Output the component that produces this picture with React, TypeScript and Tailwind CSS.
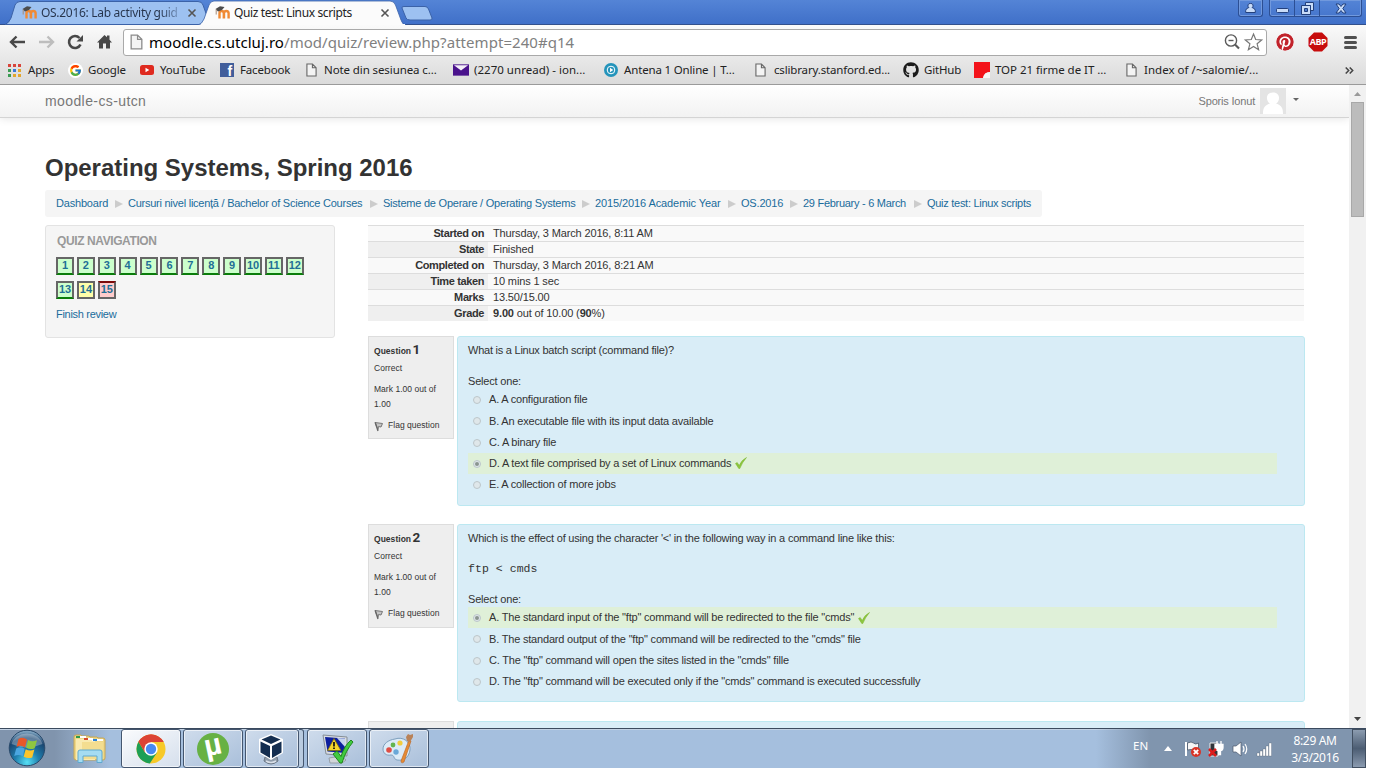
import React from "react";
import { FcGoogle } from "react-icons/fc";
import { FaGithub, FaPinterest } from "react-icons/fa";

function MoodleIcon() {
  return (
    <svg width="17" height="15" viewBox="0 0 17 15" className="shrink-0">
      <path d="M5.500 13.500V8Q5.500 6 7.500 6T9.800 8V13.500M10 13.500V8Q10.300 6 12.300 6T14.600 8V13.500" fill="none" stroke="#f08a34" strokeWidth="2.400" />
      <path d="M1.500 4L6 1.200 10.500 2 8 5 4 6.500Z" fill="#4c4c4c" />
      <path d="M2.200 4.500v5" stroke="#a58a78" strokeWidth="1" />
    </svg>
  );
}

function PageIcon({ className }: { className?: string }) {
  return (
    <svg width="12" height="15" viewBox="0 0 12 15" className={className}>
      <path d="M1 1h6l4 4v9H1z M7 1v4h4" fill="#f4f4f4" stroke="currentColor" strokeWidth="1.2" />
    </svg>
  );
}

function Close() {
  return (
    <svg width="10" height="10" viewBox="0 0 10 10" className="shrink-0">
      <path d="M1.500 1.500l7 7M8.500 1.500l-7 7" stroke="#555" strokeWidth="1.600" />
    </svg>
  );
}

function TabStrip() {
  return (
    <div className="relative flex h-[25px] bg-gradient-to-b from-[#5484d6] to-[#3f6fc8]">
      <svg width="1366" height="25" viewBox="0 0 1366 25" className="absolute left-0 top-0">
        <path d="M0 24.500H1366" stroke="#32508c" />
        <path d="M5 24.500Q9 23 11 18L15 5Q16.500 1.500 20 1.500H198Q202 1.500 203 5L210 24.500Z" fill="#9dc1f1" stroke="#3b62a8" />
        <path d="M198 25Q202 24 204 19L209 5Q210.500 1 214 1H390Q394 1 395.500 5L401 20Q402.500 25 406 25Z" fill="#fbfbfb" stroke="#3b62a8" strokeWidth=".8" />
        <path d="M201 25h204" stroke="#fbfbfb" strokeWidth="2" />
        <path d="M402 8Q401.500 6.500 404 6.500H425Q427.500 6.500 428.500 9L432 18Q432.500 20 430 20H410Q407 20 406 18Z" fill="#9dc1f1" stroke="#3b62a8" />
      </svg>
      <div className="relative flex h-[25px] w-[203px] items-center pl-[21px]">
        <MoodleIcon />
        <span className="ml-[3px] w-[140px] whitespace-nowrap bg-gradient-to-r from-[#26344c] from-85% to-[#86a8d8] bg-clip-text text-[12px] tracking-[-0.3px] text-transparent">OS.2016: Lab activity guid</span>
        <span className="ml-[6px]"><Close /></span>
      </div>
      <div className="relative flex h-[25px] w-[200px] items-center pl-[11px]">
        <MoodleIcon />
        <span className="ml-[3px] w-[143px] whitespace-nowrap text-[12px] tracking-[-0.38px] text-[#222]">Quiz test: Linux scripts</span>
        <span className="ml-[3px]"><Close /></span>
      </div>
      <div className="relative ml-auto mr-[4px] flex h-[17px] gap-[6px]">
        <div className="flex w-[25px] items-center justify-center rounded-b-[3px] border border-t-0 border-[#2c4f94] shadow-[inset_0_0_0_1px_#7199dd]">
          <svg width="11" height="10" viewBox="0 0 11 10"><path d="M5.500.5a2.200 2.200 0 0 1 1.600 4q3 .8 3.200 3v2H.7v-2q.2-2.200 3.200-3a2.200 2.200 0 0 1 1.600-4Z" fill="#c9dcf8" stroke="#23407c" /></svg>
        </div>
        <div className="flex w-[93px] rounded-b-[3px] border border-t-0 border-[#2c4f94] shadow-[inset_0_0_0_1px_#7199dd]">
          <div className="flex w-[25px] items-end justify-center border-r border-[#2c4f94] pb-[3px]">
            <svg width="13" height="5" viewBox="0 0 13 5"><rect x=".5" y=".5" width="12" height="4" rx="1" fill="#c9dcf8" stroke="#23407c" /></svg>
          </div>
          <div className="flex w-[25px] items-center justify-center border-r border-[#2c4f94]">
            <svg width="13" height="13" viewBox="0 0 13 13">
              <path d="M4.500.5h8v8h-3v-5h-5z" fill="#c9dcf8" stroke="#23407c" />
              <path d="M.5 3.500h9v9h-9zM3.500 6.500v3h3v-3z" fill="#c9dcf8" fillRule="evenodd" stroke="#23407c" />
            </svg>
          </div>
          <div className="flex grow items-center justify-center">
            <svg width="12" height="11" viewBox="0 0 12 11"><path d="M1 1h3l2 2.500L8 1h3L7.800 5.500 11 10H8L6 7.500 4 10H1l3.200-4.500z" fill="#c9dcf8" stroke="#23407c" /></svg>
          </div>
        </div>
      </div>
    </div>
  );
}

function Toolbar() {
  return (
    <div className="flex h-[32px] items-center pt-[2px]">
      <svg width="123" height="26" viewBox="0 0 123 26" className="shrink-0">
        <g fill="none" strokeWidth="2.400">
          <path d="M25 13H11M16.500 7.500L11 13l5.500 5.500" stroke="#484848" />
          <path d="M39 13h14M47.500 7.500L53 13l-5.500 5.500" stroke="#bdbdbd" />
          <path d="M80.500 15.500A6 6 0 1 1 79.500 9" stroke="#484848" strokeWidth="2.600" />
        </g>
        <path d="M83 6v6.500h-6.500z" fill="#484848" />
        <path d="M97 13.500L104.500 6l2.500 2.300V6.500h2.500v4.300l2.500 2.700h-2v6h-4v-5h-3v5h-4v-6z" fill="#484848" />
      </svg>
      <div className="flex h-[27px] w-[1144px] items-center rounded-[3px] border border-[#a9a9a9] bg-white pl-[6px]">
        <PageIcon className="h-[16px] w-[13px] text-[#8b8b8b]" />
        <span className="ml-[6px] mt-px whitespace-nowrap text-[15px] tracking-[0.05px] text-[#808080]"><span className="text-black">moodle.cs.utcluj.ro</span>/mod/quiz/review.php?attempt=240#q14</span>
        <svg width="40" height="22" viewBox="0 0 40 22" className="ml-auto mr-[2px]">
          <circle cx="7" cy="9.500" r="5.600" fill="none" stroke="#5a5a5a" strokeWidth="1.400" />
          <path d="M4.500 9.500h5" stroke="#5a5a5a" strokeWidth="1.400" />
          <path d="M11 13.500l4 4" stroke="#5a5a5a" strokeWidth="2.200" />
          <path d="M29.500 3l2.200 5.500 6 .5-4.600 3.800 1.500 5.900-5.100-3.200-5.100 3.200 1.500-5.900-4.600-3.800 6-.5z" fill="#fff" stroke="#777" strokeWidth="1.200" />
        </svg>
      </div>
      <FaPinterest className="ml-[9px] size-[18px] shrink-0 rounded-full bg-white text-[#c1232b]" />
      <div className="relative ml-[14px] size-[20px] shrink-0">
        <svg width="20" height="20" viewBox="0 0 20 20" className="absolute"><path d="M6 .5h8L19.500 6v8L14 19.500H6L.5 14V6z" fill="#c70d0d" /></svg>
        <span className="absolute inset-0 text-center font-['Open_Sans'] text-[9px] font-bold leading-[20px] tracking-[-0.5px] text-white">ABP</span>
      </div>
      <div className="ml-[16px] flex w-[13px] flex-col gap-[2px]">
        <i className="h-[3px] rounded-sm bg-[#505050]" /><i className="h-[3px] rounded-sm bg-[#505050]" /><i className="h-[3px] rounded-sm bg-[#505050]" />
      </div>
    </div>
  );
}

function Mark({ w, icon, children }: { w: string; icon: React.ReactNode; children: React.ReactNode }) {
  return (
    <div className={"flex shrink-0 items-center whitespace-nowrap " + w}>
      {icon}
      <span>{children}</span>
    </div>
  );
}

function Bookmarks() {
  const dots = ["#d8453b", "#d8453b", "#d8453b", "#3b9b52", "#3b78d8", "#e3a62e", "#3b9b52", "#e3a62e", "#e3a62e"];
  return (
    <div className="flex h-[28px] items-center border-b border-[#9a9a9a] pb-px pl-[8px] text-[11.500px] tracking-[-0.16px] text-[#222]">
      <Mark w="w-[60px]" icon={<svg width="13" height="13" viewBox="0 0 13 13" className="mr-[7px]">{dots.map((c, i) => <rect key={i} x={(i % 3) * 5} y={Math.floor(i / 3) * 5} width="3" height="3" fill={c} />)}</svg>}>Apps</Mark>
      <Mark w="w-[72px]" icon={<span className="mr-[5px] flex size-[15px] items-center justify-center rounded-full bg-white"><FcGoogle className="size-[13px]" /></span>}>Google</Mark>
      <Mark w="w-[80px]" icon={<svg width="14" height="10" viewBox="0 0 14 10" className="mr-[6px]"><rect width="14" height="10" rx="2.500" fill="#df2a1f" /><path d="M5.500 2.700v4.600L9.300 5z" fill="#fff" /></svg>}>YouTube</Mark>
      <Mark w="w-[86px]" icon={<span className="mr-[6px] flex h-[14px] w-[14px] items-center justify-end bg-[#415e9b] pr-[2px] pt-[2px] font-['Liberation_Sans'] text-[14px] font-bold leading-[14px] text-white">f</span>}>Facebook</Mark>
      <Mark w="w-[147px]" icon={<PageIcon className="mr-[7px] h-[14px] w-[11px] text-[#666]" />}><span className="tracking-[-0.1px]">Note din sesiunea c...</span></Mark>
      <Mark w="w-[151px]" icon={<svg width="16" height="12" viewBox="0 0 17 12" className="mr-[5px]"><path d="M0 0h17v12H0z" fill="#4a128c" /><path d="M1 1l7.500 5.500L16 1z" fill="#f4eff9" /></svg>}><span className="tracking-[0.02px]">(2270 unread) - ion...</span></Mark>
      <Mark w="w-[151px]" icon={<svg width="14" height="14" viewBox="0 0 14 14" className="mr-[6px]"><circle cx="7" cy="7" r="7" fill="#2494bb" /><circle cx="7" cy="7" r="3.800" fill="none" stroke="#fff" /><path d="M6 4.700v4.600L9.300 7z" fill="#fff" /></svg>}>Antena 1 Online | T...</Mark>
      <Mark w="w-[148px]" icon={<PageIcon className="mr-[8px] h-[14px] w-[11px] text-[#666]" />}>cslibrary.stanford.ed...</Mark>
      <Mark w="w-[71px]" icon={<FaGithub className="mr-[5px] size-[16px] text-[#1b1b1b]" />}>GitHub</Mark>
      <Mark w="w-[152px]" icon={<svg width="16" height="16" viewBox="0 0 16 16" className="mr-[5px]"><path d="M0 0h16v10q-6 0-7 6H0z" fill="#f3131a" /><path d="M16 10q-6 0-7 6h7z" fill="#f7f7f7" /></svg>}><span className="tracking-[-0.04px]">TOP 21 firme de IT ...</span></Mark>
      <Mark w="w-[200px]" icon={<PageIcon className="mr-[7px] h-[14px] w-[11px] text-[#666]" />}><span className="tracking-[0.03px]">Index of /~salomie/...</span></Mark>
      <svg width="9" height="7" viewBox="0 0 9 7" className="ml-auto mr-[12px]"><path d="M.7.5l3 3-3 3M4.700.5l3 3-3 3" fill="none" stroke="#444" strokeWidth="1.500" /></svg>
    </div>
  );
}

const crumbs = [
  { t: "Dashboard", c: "w-[72px]" },
  { t: "Cursuri nivel licență / Bachelor of Science Courses", c: "w-[255px] tracking-[-0.25px]" },
  { t: "Sisteme de Operare / Operating Systems", c: "w-[212px] tracking-[-0.23px]" },
  { t: "2015/2016 Academic Year", c: "w-[146px] tracking-[-0.1px]" },
  { t: "OS.2016", c: "w-[62px]" },
  { t: "29 February - 6 March", c: "w-[124px] tracking-[-0.28px]" },
  { t: "Quiz test: Linux scripts", c: "w-[110px] tracking-[-0.28px]" },
];

function QuizNav() {
  return (
    <aside className="h-[113px] w-[290px] shrink-0 rounded-[3px] border border-[#e3e3e3] bg-[#f5f5f5] pl-[10px]">
      <h2 className="ml-px mt-[7px] text-[12px] font-bold leading-[16px] tracking-[-0.4px] text-[#999]">QUIZ NAVIGATION</h2>
      <div className="mt-[8px] flex w-[260px] flex-wrap gap-x-[2.900px] gap-y-[6px] tracking-normal">
        {Array.from({ length: 15 }, (_, i) => i + 1).map((n) => (
          <span key={n} className={"h-[18px] w-[18px] border-2 text-center text-[11px] font-bold leading-[13px] text-[#1f6f96] " + (n < 14 ? "border-[#666] border-b-[#0a7d0a] bg-[#ccffcc]" : n === 14 ? "border-[#666] bg-[#ffffaa]" : "border-[#666] border-t-[#7d0a0a] bg-[#ffcccc]")}>{n}</span>
        ))}
      </div>
      <div className="mt-[8px] leading-[15px] tracking-[-0.3px] text-[#1a6c9c]">Finish review</div>
    </aside>
  );
}

const summary: [string, React.ReactNode][] = [
  ["Started on", "Thursday, 3 March 2016, 8:11 AM"],
  ["State", "Finished"],
  ["Completed on", "Thursday, 3 March 2016, 8:21 AM"],
  ["Time taken", "10 mins 1 sec"],
  ["Marks", "13.50/15.00"],
  ["Grade", <><b>9.00</b> out of 10.00 (<b>90</b>%)</>],
];

function Summary() {
  return (
    <div className="mb-[15px] w-[936px]">
      {summary.map(([k, v], i) => (
        <div key={k} className="flex h-[16px] border-t border-[#ddd] bg-[#f9f9f9] leading-[15px]">
          <div className={"w-[120px] pr-[4px] text-right font-bold tracking-[-0.38px] " + (i % 2 ? "bg-[#efefef]" : "")}>{k}</div>
          <div className="pl-[5px] tracking-[-0.14px]">{v}</div>
        </div>
      ))}
    </div>
  );
}

function Check() {
  return (
    <svg width="12" height="12" viewBox="0 0 12 12" className="ml-[4px]">
      <path d="M.5 6.500L2.200 5.500 4.200 8.500Q6.500 3 11.500.5 7.500 5 4.800 11.500H3.800Z" fill="#8dc63f" stroke="#78b52c" strokeWidth=".5" />
    </svg>
  );
}

function Info({ n, h }: { n: number; h: string }) {
  return (
    <div className={"w-[86px] shrink-0 border border-[#ddd] bg-[#eee] pl-[5px] text-[8.500px] tracking-[0.03px] " + h}>
      <div className="mt-[3px] h-[18px] whitespace-nowrap font-bold leading-[18px]">Question <span className="-ml-px font-['Roboto'] text-[13.500px]">{n}</span></div>
      <div className="mt-[3px] leading-[15px]">Correct</div>
      <div className="mt-[6px] leading-[15px]">Mark 1.00 out of<br />1.00</div>
      <div className="mt-[6px] flex items-center leading-[15px]">
        <svg width="10" height="11" viewBox="0 0 10 11" className="mr-[4px] mt-[2px]">
          <path d="M1 1.500l7.500 1L7 6 4.500 5.500 4 8.500z" fill="#c4c4c4" stroke="#777" /><path d="M1.200 1.500L4 10" stroke="#666" strokeWidth="1.300" />
        </svg>
        Flag question
      </div>
    </div>
  );
}

function Option({ text, on }: { text: string; on?: boolean }) {
  return (
    <div className={"flex h-[21.250px] w-[809px] items-center whitespace-nowrap pl-[5px] " + (on ? "bg-[#dff0d8]" : "")}>
      <span className="mr-[8px] mt-[1px] flex size-[8px] items-center justify-center rounded-full border border-[#bcc6ca] bg-[#dfe7ea]">{on && <i className="size-[4px] rounded-full bg-[#8b9590]" />}</span>
      {text}
      {on && <Check />}
    </div>
  );
}

function Question({ n, infoH, bodyH, children }: { n: number; infoH: string; bodyH: string; children?: React.ReactNode }) {
  return (
    <div className="mb-[18px] flex w-[937px] items-start gap-[3px]">
      <Info n={n} h={infoH} />
      <div className={"w-[848px] rounded-[3px] border border-[#bce8f1] bg-[#d9edf7] pl-[10px] " + bodyH}>{children}</div>
    </div>
  );
}

function Page() {
  return (
    <div className="flex h-[643px] font-['Liberation_Sans',Arial,sans-serif] text-[11px] tracking-[-0.19px] text-[#333]">
      <div className="h-full w-[1349px] overflow-hidden bg-white">
        <nav className="flex h-[33px] items-center border-b border-[#d4d4d4] bg-gradient-to-b from-white to-[#f2f2f2] pl-[45px] text-[#777] shadow-[0_1px_8px_rgba(0,0,0,0.1)]">
          <span className="text-[14px] tracking-[0.4px]">moodle-cs-utcn</span>
          <span className="ml-auto mr-[5px]">Sporis Ionut</span>
          <svg width="26" height="26" viewBox="0 0 26 26"><path d="M0 0h26v26H0z" fill="#e4e4e4" /><path d="M13 4.500c8 0 7 9 3 11 6 2 7 5 7 10.500H3c0-5.500 1-8.500 7-10.500-4-2-5-11 3-11z" fill="#fff" /></svg>
          <svg width="6" height="3" viewBox="0 0 6 3" className="-mt-[3px] ml-[7px] mr-[50px]"><path d="M0 0h6L3 3z" fill="#666" /></svg>
        </nav>
        <h1 className="ml-[45px] mt-[35px] text-[24px] font-bold leading-[30px] tracking-[-0.02px]">Operating Systems, Spring 2016</h1>
        <div className="ml-[45px] mt-[7px] flex h-[27px] w-[997px] items-center rounded-[3px] bg-[#f5f5f5] pl-[11px] text-[#1a6c9c]">
          {crumbs.map((c, i) => (
            <div key={c.t} className={"flex shrink-0 items-center justify-between whitespace-nowrap " + c.c}>
              {c.t}
              {i < 6 && <svg width="8" height="8" viewBox="0 0 8 8" className="mr-[5px]"><path d="M0 0l8 4-8 4z" fill="#ccc" /></svg>}
            </div>
          ))}
        </div>
        <div className="ml-[45px] mt-[8px] flex gap-[33px]">
          <QuizNav />
          <main>
            <Summary />
            <Question n={1} infoH="h-[103px]" bodyH="h-[170px]">
              <div className="mt-[5px] leading-[16px] tracking-[-0.24px]">What is a Linux batch script (command file)?</div>
              <div className="mt-[16px] leading-[15px]">Select one:</div>
              <Option text="A. A configuration file" />
              <Option text="B. An executable file with its input data available" />
              <Option text="C. A binary file" />
              <Option text="D. A text file comprised by a set of Linux commands" on />
              <Option text="E. A collection of more jobs" />
            </Question>
            <Question n={2} infoH="h-[104px]" bodyH="h-[178px]">
              <div className="mt-[5px] leading-[16px] tracking-[-0.2px]">Which is the effect of using the character '&lt;' in the following way in a command line like this:</div>
              <div className="mt-[15px] whitespace-pre font-['Liberation_Mono',monospace] text-[11.500px] leading-[15px] tracking-[0.05px]">ftp &lt; cmds</div>
              <div className="mt-[16px] leading-[15px]">Select one:</div>
              <Option text={'A. The standard input of the "ftp" command will be redirected to the file "cmds"'} on />
              <Option text={'B. The standard output of the "ftp" command will be redirected to the "cmds" file'} />
              <Option text={'C. The "ftp" command will open the sites listed in the "cmds" fille'} />
              <Option text={'D. The "ftp" command will be executed only if the "cmds" command is executed successfully'} />
            </Question>
            <div className="mt-[19px] flex gap-[3px]">
              <div className="h-[20px] w-[86px] border border-[#ddd] bg-[#eee]" />
              <div className="h-[20px] w-[848px] rounded-[3px] border border-[#bce8f1] bg-[#d9edf7]" />
            </div>
          </main>
        </div>
      </div>
      <div className="flex w-[17px] flex-col items-center bg-[#f1f1f1]">
        <svg width="7" height="4" viewBox="0 0 7 4" className="mt-[7px]"><path d="M0 4h7L3.500 0z" fill="#9a9a9a" /></svg>
        <div className="mt-[6px] h-[115px] w-[13px] border border-[#a8a8a8] bg-[#bcbcbc]" />
        <svg width="7" height="4" viewBox="0 0 7 4" className="mb-[7px] mt-auto"><path d="M0 0h7L3.500 4z" fill="#444" /></svg>
      </div>
    </div>
  );
}

function TaskButton({ w, active, children }: { w: string; active?: boolean; children: React.ReactNode }) {
  return (
    <div className={"flex h-[39px] items-center justify-center rounded-[3px] border border-[#44566f] shadow-[inset_0_0_0_1px_rgba(255,255,255,0.6)] " + w + (active ? " bg-gradient-to-br from-[#fafbfd] to-[#d5dfec]" : " bg-gradient-to-br from-[#cfdcec] to-[#a9bfda]")}>
      {children}
    </div>
  );
}

function Taskbar() {
  return (
    <div className="flex h-[40px] border-t border-[#3b4a5e] bg-gradient-to-r from-[#8094ad] from-4% via-[#a5bfde] via-8% to-[#a5bfde] shadow-[inset_0_1px_0_#c3d2e4]">
      <svg width="38" height="38" viewBox="0 0 38 38" className="ml-[8px] shrink-0">
        <defs>
          <radialGradient id="orb" cx="50%" cy="90%" r="85%"><stop offset="0" stopColor="#56e0f5" /><stop offset=".4" stopColor="#1f7fae" /><stop offset=".8" stopColor="#1a4570" /><stop offset="1" stopColor="#7ba0bd" /></radialGradient>
        </defs>
        <circle cx="19" cy="19" r="17.800" fill="url(#orb)" stroke="#29496a" />
        <path d="M3.500 15a16 14 0 0 1 31 0q-16 7-31 0z" fill="#fff" opacity=".3" />
        <path d="M10.500 10q4-2.500 8.500.5l-2 8q-4-3-8.500-.5z" fill="#e8582a" />
        <path d="M20 11q4 2.500 9 .2l-2.300 8q-4.500 2-8.500-.5z" fill="#8fc740" />
        <path d="M8.200 19.500q4-2.500 8.500.2l-2 7.500q-4-2.500-8.500-.2z" fill="#4ba6e0" />
        <path d="M17.700 20.200q4 2.500 8.700.4l-2.200 7.900q-4.500 1.500-8.500-.8z" fill="#fcc52c" />
      </svg>
      <svg width="34" height="32" viewBox="0 0 34 32" className="ml-[26px] mt-[4px] shrink-0">
        <path d="M2 4q0-2 2-2h5l1 1h7l1 1h7l1 1h5q2 0 2 2v18q0 2-2 2H4q-2 0-2-2z" fill="#efd888" stroke="#c6a654" />
        <path d="M4 6h19v21H4z" fill="#f9eab0" /><path d="M10 9h21v17H10z" fill="#f3dd90" />
        <path d="M4 3h10v2H4zM12 5h9v2h-9zM20 6h11v2H20z" fill="#fff" />
        <path d="M4 3h4v2H4z" fill="#2f9a4d" /><path d="M12 5h4v2h-4z" fill="#d74a30" /><path d="M21 6h4v2h-4z" fill="#2c83d8" />
        <path d="M6 29.500V19q0-2 2-2h20q2 0 2 2v10.500h-5V23H11v6.500z" fill="#a5dcf2" stroke="#5fa9d0" />
      </svg>
      <div className="ml-[15px] flex">
        <TaskButton w="w-[60px]" active>
          <svg width="30" height="30" viewBox="0 0 30 30">
            <circle cx="15" cy="15" r="14.500" fill="#f7c928" />
            <path d="M15 15L2.500 7.700A14.500 14.500 0 0 1 27.600 7.700L15 8z" fill="#dc4335" />
            <path d="M2.500 7.700A14.500 14.500 0 0 0 13.800 29.500L21 18.500 15 15 9 18.500z" fill="#1d9f56" />
            <path d="M2.500 7.700L9 18.500 15 8h12.600A14.500 14.500 0 0 0 2.500 7.700z" fill="#dc4335" />
            <circle cx="15" cy="15" r="6.700" fill="#fff" /><circle cx="15" cy="15" r="5.200" fill="#4889f1" />
          </svg>
        </TaskButton>
        <div className="ml-[2px]"><TaskButton w="w-[60px]">
          <span className="flex size-[32px] items-center justify-center rounded-full bg-[#67b144] pb-[7px] font-['Liberation_Sans'] text-[30px] font-bold leading-none text-white"><span className="-rotate-12">µ</span></span>
        </TaskButton></div>
        <div className="ml-[2px]"><TaskButton w="w-[54px]">
          <svg width="28" height="32" viewBox="0 0 28 32" className="-ml-[3px]">
            <path d="M8 24h12l1 4q-7 6-14 0z" fill="#8f9cab" stroke="#6a7685" /><path d="M9 28q5 3 10 0" stroke="#dbe1e9" fill="none" strokeWidth="1.500" />
            <path d="M14 1l12 5v14l-12 7L2 20V6z" fill="#fff" />
            <path d="M14 2.500L23.500 6.500 14 11 4.500 6.500zM3.500 8.500L13 13v12L3.500 19.500zM24.500 8.500L15 13v12l9.500-5.500z" fill="#142e50" />
          </svg>
        </TaskButton></div>
        <div className="h-[39px] w-[5px] rounded-r-[3px] border border-l-0 border-[#44566f] bg-[#b9cbe0]" />
        <div className="ml-[3px]"><TaskButton w="w-[60px]">
          <svg width="34" height="32" viewBox="0 0 34 32" className="ml-[2px]">
            <path d="M8 25l12-2 5 4-4 3H9z" fill="#d2d6da" stroke="#979fa7" />
            <path d="M2 2l24 2v19L5 21z" fill="#d9dde1" stroke="#858e97" /><path d="M4 4l20 1.500V20L6.500 18.500z" fill="#0d1f9e" /><path d="M16 5l8 .5V14z" fill="#c5d3ee" />
            <path d="M13 5.500L20 17.500H6.500z" fill="#f6d62c" stroke="#7a6a14" strokeWidth=".8" /><path d="M13 9v4.500M13 14.500V16" stroke="#111" strokeWidth="1.700" />
            <path d="M12 21l4-3 4 5.500Q23 13 30 7l2 2q-7 8-11 21h-2z" fill="#40cb40" stroke="#21851f" />
          </svg>
        </TaskButton></div>
        <div className="ml-[2px]"><TaskButton w="w-[60px]">
          <svg width="34" height="32" viewBox="0 0 34 32" className="-ml-[2px]">
            <path d="M14 6C22 3 30 9 29 17s-7 11-13 10c-4-1-2-5-6-5-5 1-8-2-8-6C2 11 7 7 14 6z" fill="#dcebf7" stroke="#7d9fbd" />
            <circle cx="8" cy="17" r="2.800" fill="#df4e45" /><circle cx="12" cy="12" r="2.400" fill="#63b44e" /><circle cx="19" cy="10" r="2.600" fill="#f2cd3f" /><circle cx="15" cy="19" r="2.700" fill="#6aa8d8" />
            <path d="M28 7l2 1-7 21q-3 2-3-1z" fill="#e58b35" stroke="#b86220" strokeWidth=".6" /><path d="M25 4l2-3 2 1 3-1v3l-3 5-3-1z" fill="#b98258" />
          </svg>
        </TaskButton></div>
      </div>
      <div className="ml-auto flex h-full w-[270px] items-center bg-gradient-to-r from-transparent to-[#8095ae] to-20% text-white">
        <span className="mb-[5px] ml-[37px] w-[31px] text-[11.500px]">EN</span>
        <svg width="8" height="5" viewBox="0 0 8 5"><path d="M0 5h8L4 0z" fill="#fff" /></svg>
        <svg width="92" height="18" viewBox="0 0 92 18" className="ml-[12px]">
          <path d="M2 2v14" stroke="#fff" strokeWidth="2" /><path d="M3.500 3q4-2 6 0t5 0v7q-3 1-5 0t-6 0z" fill="#f5f5f5" stroke="#485568" strokeWidth=".8" />
          <circle cx="12" cy="12" r="5" fill="#d93426" /><path d="M9.800 9.800l4.400 4.400M14.200 9.800l-4.400 4.400" stroke="#fff" strokeWidth="1.800" />
          <path d="M26 3h8v13h-8z" fill="#31353b" stroke="#eee" /><path d="M31 4.500h8v3q0 3-2.500 3v4h-2v-4q-3.500 0-3.500-3zM33 4V1M37 4V1" fill="#fff" stroke="#fff" strokeWidth="1.300" /><path d="M25 9l7 7M32 9l-7 7" stroke="#dc1c1c" strokeWidth="2.500" />
          <path d="M49 6h3l5-4v14l-5-4h-3z" fill="#fff" stroke="#4a586b" strokeWidth=".7" /><path d="M59 6q2 3 0 6M61 4q3.500 5 0 10" fill="none" stroke="#fff" strokeWidth="1.200" />
          <path d="M73 13h2.500v3H73zM76 11h2.500v5H76zM79 9h2.500v7H79zM82 6h2.500v10H82zM85 3h2.500v13H85z" fill="#fff" stroke="#4a586b" strokeWidth=".3" />
        </svg>
        <div className="ml-[7px] w-[64px] whitespace-nowrap text-center text-[12px] leading-[17px] tracking-[-0.35px]">8:29 AM<br />3/3/2016</div>
        <div className="ml-auto h-full w-[14px] border border-[#414f61] bg-gradient-to-b from-[#8c9cb0] via-[#4c5d73] to-[#8b9bb0]" />
      </div>
    </div>
  );
}

export default function App() {
  return (
    <div className="h-[768px] w-full overflow-hidden bg-white font-['Noto_Sans',sans-serif]">
      <div className="w-[1366px]">
        <TabStrip />
        <div className="bg-gradient-to-b from-[#fafafa] to-[#dadada]">
          <Toolbar />
          <Bookmarks />
        </div>
        <Page />
        <Taskbar />
      </div>
    </div>
  );
}
